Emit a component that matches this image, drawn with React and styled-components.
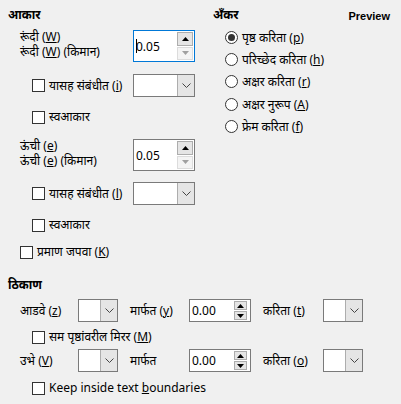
import React from 'react'
import styled, { createGlobalStyle } from 'styled-components';

const GlobalStyle = createGlobalStyle`
  body {
    margin: 0;
    background: #f0f0f0;
    font-family: "Noto Sans", "Noto Sans Devanagari", "Liberation Sans", sans-serif;
    font-size: 12px;
    color: #000;
  }
`

function Spin({ value, tall, focused }) {
    return (
        <SpinBox tall={tall ? 1 : 0} focused={focused ? 1 : 0}>
            <SpinValue>
                {focused && <Caret />}
                {value}
            </SpinValue>
            <SpinButtons tall={tall ? 1 : 0}>
                <SpinButton>
                    <svg width="7" height="4" viewBox="0 0 7 4"><path d="M0 4 L3.5 0 L7 4 Z" fill="#000" /></svg>
                </SpinButton>
                <SpinButton disabled={tall ? 1 : 0}>
                    <svg width="7" height="4" viewBox="0 0 7 4"><path d="M0 0 L3.5 4 L7 0 Z" fill={tall ? '#a0a0a0' : '#000'} /></svg>
                </SpinButton>
            </SpinButtons>
        </SpinBox>
    )
}

function Combo({ width }) {
    return (
        <ComboBox width={width}>
            <ComboField />
            <ComboButton>
                <svg width="9" height="5" viewBox="0 0 9 5"><path d="M0.5 0.5 L4.5 4.5 L8.5 0.5" fill="none" stroke="#444" strokeWidth="1" /></svg>
            </ComboButton>
        </ComboBox>
    )
}

function Check({ children }) {
    return (
        <CheckLabel>
            <CheckBox />
            <span>{children}</span>
        </CheckLabel>
    )
}

function Radio({ checked, children }) {
    return (
        <RadioRow>
            <RadioDot checked={checked ? 1 : 0} />
            <span>{children}</span>
        </RadioRow>
    )
}

function App() {
    return (
        <Page>
            <GlobalStyle />
            <Top>
                <Column>
                    <Heading>आकार</Heading>
                    <SizeRow gap={6}>
                        <Labels>
                            <Line>रूंदी (<u>W</u>)</Line>
                            <Line>रूंदी (<u>W</u>) (किमान)</Line>
                        </Labels>
                        <Spin value="0.05" tall focused />
                    </SizeRow>
                    <IndentRow gap={12}>
                        <Check>यासह संबंधीत (<u>i</u>)</Check>
                        <Combo width={62} />
                    </IndentRow>
                    <CheckRow indent={24} gap={12}>
                        <Check>स्वआकार</Check>
                    </CheckRow>
                    <SizeRow gap={14}>
                        <Labels>
                            <Line>ऊंची (<u>e</u>)</Line>
                            <Line>ऊंची (<u>e</u>) (किमान)</Line>
                        </Labels>
                        <Spin value="0.05" tall />
                    </SizeRow>
                    <IndentRow gap={11}>
                        <Check>यासह संबंधीत (<u>l</u>)</Check>
                        <Combo width={62} />
                    </IndentRow>
                    <CheckRow indent={24} gap={12}>
                        <Check>स्वआकार</Check>
                    </CheckRow>
                    <CheckRow indent={12} gap={11}>
                        <Check>प्रमाण जपवा (<u>K</u>)</Check>
                    </CheckRow>
                </Column>
                <Column>
                    <HeadRow>
                        <Heading>अँकर</Heading>
                        <PreviewLabel>Preview</PreviewLabel>
                    </HeadRow>
                    <RadioList>
                        <Radio checked>पृष्ठ करिता (<u>p</u>)</Radio>
                        <Radio>परिच्छेद करिता (<u>h</u>)</Radio>
                        <Radio>अक्षर करिता (<u>r</u>)</Radio>
                        <Radio>अक्षर नुरूप (<u>A</u>)</Radio>
                        <Radio>फ्रेम करिता (<u>f</u>)</Radio>
                    </RadioList>
                </Column>
            </Top>
            <Position>
                <Heading>ठिकाण</Heading>
                <PosRow gap={5}>
                    <PosLabel>आडवे (<u>z</u>)</PosLabel>
                    <Combo width={40} />
                    <ByLabel>मार्फत (<u>y</u>)</ByLabel>
                    <Spin value="0.00" />
                    <ToLabel>करिता (<u>t</u>)</ToLabel>
                    <Combo width={40} />
                </PosRow>
                <CheckRow indent={24} gap={7}>
                    <Check>सम पृष्ठांवरील मिरर (<u>M</u>)</Check>
                </CheckRow>
                <PosRow gap={4}>
                    <PosLabel>उभे (<u>V</u>)</PosLabel>
                    <Combo width={40} />
                    <ByLabel>मार्फत</ByLabel>
                    <Spin value="0.00" />
                    <ToLabel>करिता (<u>o</u>)</ToLabel>
                    <Combo width={40} />
                </PosRow>
                <CheckRow indent={24} gap={8}>
                    <Check>Keep inside text <u>b</u>oundaries</Check>
                </CheckRow>
            </Position>
        </Page>
    )
}

const Page = styled.div`
    width: 401px;
    height: 404px;
    padding: 0 8px;
    box-sizing: border-box;
    overflow: hidden;
`

const Top = styled.div`
    display: grid;
    grid-template-columns: 187px 1fr;
    column-gap: 18px;
    align-items: start;
`

const Column = styled.div`
    display: flex;
    flex-direction: column;
`

const Heading = styled.div`
    font-weight: 700;
    height: 18px;
    line-height: 18px;
    margin-top: 6px;
    white-space: nowrap;
`

const SizeRow = styled.div`
    display: flex;
    align-items: flex-start;
    justify-content: space-between;
    height: 32px;
    padding-left: 12px;
    margin-top: ${({ gap }) => gap}px;
`

const Labels = styled.div`
    display: flex;
    flex-direction: column;
    margin-top: -1px;
`

const Line = styled.span`
    display: block;
    height: 15px;
    line-height: 15px;
    white-space: nowrap;
`

const SpinBox = styled.div`
    display: flex;
    align-items: stretch;
    width: 62px;
    height: ${({ tall }) => tall ? '32px' : '23px'};
    box-sizing: border-box;
    background: #fff;
    border: 1px solid ${({ focused }) => focused ? '#0078d7' : '#7a7a7a'};
    flex-shrink: 0;
`

const SpinValue = styled.div`
    flex: 1;
    display: flex;
    align-items: center;
    padding-left: 2px;
`

const Caret = styled.span`
    display: inline-block;
    width: 1px;
    height: 14px;
    background: #000;
    margin-right: -1px;
`

const SpinButtons = styled.div`
    display: flex;
    flex-direction: column;
    gap: 1px;
    padding: ${({ tall }) => tall ? '1px' : '1px 3px 1px 1px'};
    width: ${({ tall }) => tall ? '16px' : '13px'};
`

const SpinButton = styled.div`
    flex: 1;
    display: flex;
    align-items: center;
    justify-content: center;
    background: ${({ disabled }) => disabled ? '#f4f4f4' : '#e5e5e5'};
    border: 1px solid ${({ disabled }) => disabled ? '#dcdcdc' : '#adadad'};
`

const ComboBox = styled.div`
    display: flex;
    width: ${({ width }) => width}px;
    height: 23px;
    box-sizing: border-box;
    background: #fff;
    border: 1px solid #7a7a7a;
    flex-shrink: 0;
`

const ComboField = styled.div`
    flex: 1;
`

const ComboButton = styled.div`
    width: 16px;
    display: flex;
    align-items: center;
    justify-content: center;
    background: #e5e5e5;
    border-left: 1px solid #adadad;
`

const IndentRow = styled.div`
    display: flex;
    align-items: center;
    justify-content: space-between;
    height: 23px;
    padding-left: 24px;
    margin-top: ${({ gap }) => gap}px;
`

const CheckRow = styled.div`
    display: flex;
    align-items: center;
    height: 16px;
    padding-left: ${({ indent }) => indent}px;
    margin-top: ${({ gap }) => gap}px;
`

const CheckLabel = styled.label`
    display: flex;
    align-items: center;
    gap: 4px;
    white-space: nowrap;
    line-height: 16px;
`

const CheckBox = styled.span`
    width: 13px;
    height: 13px;
    box-sizing: border-box;
    border: 1px solid #333;
    background: #fff;
    flex-shrink: 0;
`

const HeadRow = styled.div`
    display: flex;
    justify-content: space-between;
    align-items: flex-end;
    padding-right: 3px;
`

const PreviewLabel = styled.div`
    font-weight: 700;
    font-size: 11px;
    font-family: "Liberation Sans", sans-serif;
    line-height: 14px;
    margin-bottom: 1px;
`

const RadioList = styled.div`
    display: flex;
    flex-direction: column;
    padding-left: 12px;
    margin-top: 2px;
`

const RadioRow = styled.label`
    display: flex;
    align-items: center;
    gap: 4px;
    height: 22.4px;
    white-space: nowrap;
`

const RadioDot = styled.span`
    width: 13px;
    height: 13px;
    box-sizing: border-box;
    border-radius: 50%;
    border: 1px solid #333;
    background: #fff;
    position: relative;
    flex-shrink: 0;

    &::after {
        content: '';
        display: ${({ checked }) => checked ? 'block' : 'none'};
        position: absolute;
        left: 2px;
        top: 2px;
        width: 7px;
        height: 7px;
        border-radius: 50%;
        background: #333;
    }
`

const Position = styled.div`
    display: flex;
    flex-direction: column;
    margin-top: 10px;
`

const PosRow = styled.div`
    display: flex;
    align-items: center;
    height: 23px;
    padding-left: 12px;
    margin-top: ${({ gap }) => gap}px;
    white-space: nowrap;
`

const PosLabel = styled.span`
    width: 58px;
`

const ByLabel = styled.span`
    width: 59px;
    padding-left: 12px;
`

const ToLabel = styled.span`
    width: 60px;
    padding-left: 12px;
`

export default App
